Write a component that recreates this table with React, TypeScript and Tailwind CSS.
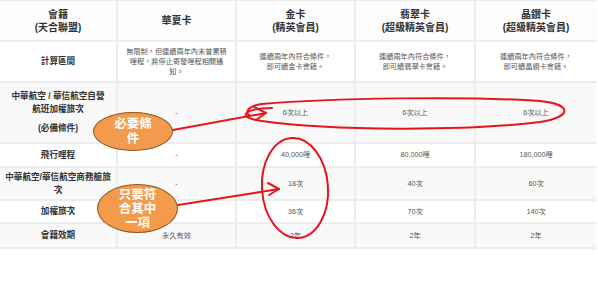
import React from "react";

const font = { fontFamily: '"Liberation Sans", "Noto Sans CJK TC", sans-serif' };

type Row = { h: string; bg: string; cells: React.ReactNode[] };

const Label = ({ children }: { children: React.ReactNode }) => (
  <div className="text-[8.6px] leading-[13px] font-bold text-[#333] text-center whitespace-nowrap">{children}</div>
);
const Small = ({ children }: { children: React.ReactNode }) => (
  <div className="text-[7.2px] leading-[10px] text-[#555] text-center whitespace-nowrap">{children}</div>
);
const Head = ({ children }: { children: React.ReactNode }) => (
  <div className="text-[10px] leading-[13px] font-bold text-[#333] text-center whitespace-nowrap">{children}</div>
);

const rows: Row[] = [
  {
    h: "h-[39px]",
    bg: "bg-[#fdfdfd]",
    cells: [
      <Head>會籍<br />(天合聯盟)</Head>,
      <Head>華夏卡</Head>,
      <Head>金卡<br />(精英會員)</Head>,
      <Head>翡翠卡<br />(超級精英會員)</Head>,
      <Head>晶鑽卡<br />(超級精英會員)</Head>,
    ],
  },
  {
    h: "h-[39px]",
    bg: "bg-white",
    cells: [
      <Label>計算區間</Label>,
      <Small>無限制，但連續兩年內未曾累積<br />哩程，將停止寄發哩程相關通<br />知。</Small>,
      <Small>連續兩年內符合條件，<br />即可續金卡會籍。</Small>,
      <Small>連續兩年內符合條件，<br />即可續翡翠卡會籍。</Small>,
      <Small>連續兩年內符合條件，<br />即可續晶鑽卡會籍。</Small>,
    ],
  },
  {
    h: "h-[59px]",
    bg: "bg-[#f9f9f9]",
    cells: [
      <Label>中華航空 / 華信航空自營<br />航班加權旅次<br /><span className="block h-[6px]" />(必備條件)</Label>,
      <Small>-</Small>,
      <Small>6次以上</Small>,
      <Small>6次以上</Small>,
      <Small>6次以上</Small>,
    ],
  },
  {
    h: "h-[22px]",
    bg: "bg-white",
    cells: [
      <Label>飛行哩程</Label>,
      <Small>-</Small>,
      <Small>40,000哩</Small>,
      <Small>80,000哩</Small>,
      <Small>180,000哩</Small>,
    ],
  },
  {
    h: "h-[31px]",
    bg: "bg-[#f9f9f9]",
    cells: [
      <Label>中華航空/華信航空商務艙旅<br />次</Label>,
      <Small>-</Small>,
      <Small>18次</Small>,
      <Small>40次</Small>,
      <Small>60次</Small>,
    ],
  },
  {
    h: "h-[21px]",
    bg: "bg-white",
    cells: [
      <Label>加權旅次</Label>,
      <Small>-</Small>,
      <Small>36次</Small>,
      <Small>70次</Small>,
      <Small>140次</Small>,
    ],
  },
  {
    h: "h-[23px]",
    bg: "bg-[#f9f9f9]",
    cells: [
      <Label>會籍效期</Label>,
      <Small>永久有效</Small>,
      <Small>2年</Small>,
      <Small>2年</Small>,
      <Small>2年</Small>,
    ],
  },
];

export default function App() {
  return (
    <div className="relative w-[598px] h-[305px] bg-white overflow-hidden" style={font}>
      <div className="w-[596px] grid grid-cols-[116px_117px_117px_118px_120px] gap-[2px] bg-[#ececec] pt-px pb-[2px]">
        {rows.map((r, i) =>
          r.cells.map((c, j) => (
            <div key={`${i}-${j}`} className={`${r.h} ${r.bg} flex items-center justify-center`}>
              {c}
            </div>
          ))
        )}
      </div>

      <svg className="absolute inset-0 pointer-events-none" width="598" height="305" viewBox="0 0 598 305">
        <g fill="none" stroke="#e8141b" strokeWidth="2" strokeLinecap="round" strokeLinejoin="round">
          <path d="M 272 108 C 240 109, 238 118, 262 121 C 330 131, 470 131, 540 122 C 575 116, 570 104, 540 101 C 470 96, 330 98, 262 104 C 248 106, 244 112, 250 116" />
          <path d="M 173 130 L 266 113" />
          <path d="M 254 107 L 266 113 L 256 120" />
          <ellipse cx="295" cy="188" rx="33" ry="50" transform="rotate(-4 295 188)" />
          <path d="M 178 205 L 279 189" />
          <path d="M 268 183 L 279 189 L 269 195" />
        </g>
      </svg>

      <div className="absolute left-[93px] top-[112px] w-[80px] h-[39px] rounded-[50%] bg-[#f39b4d] border border-[#8a5a22] flex items-center justify-center">
        <div className="text-white font-bold text-[12.5px] leading-[15px] text-center">必要條<br />件</div>
      </div>
      <div className="absolute left-[97px] top-[184px] w-[81px] h-[49px] rounded-[50%] bg-[#f39b4d] border border-[#8a5a22] flex items-center justify-center">
        <div className="text-white font-bold text-[12.5px] leading-[14px] text-center">只要符<br />合其中<br />一項</div>
      </div>
    </div>
  );
}
